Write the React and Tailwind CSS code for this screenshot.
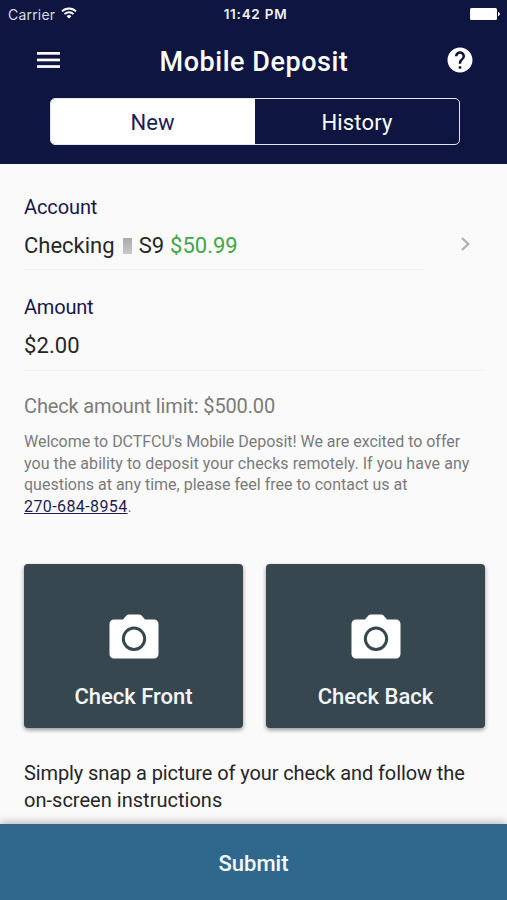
import { MdHelp } from 'react-icons/md';

const StatusBar = () => (
  <div className="grid grid-cols-3 items-center h-7 pl-[8px] pr-[7px] font-['Inter',sans-serif]">
    <div className="flex items-center gap-[6px] text-[14px] tracking-[0.2px] text-[#d9dbe8]">
      <span>Carrier</span>
      <svg className="-mt-[2px]" width="16" height="12" viewBox="0 0 16 12" fill="none" stroke="#fff" strokeWidth="1.9">
        <path d="M1 4.4a10 10 0 0 1 14 0" />
        <path d="M3.5 7.1a6.4 6.4 0 0 1 9 0" />
        <path d="M8 11.6L5.6 9.2a3.4 3.4 0 0 1 4.8 0z" fill="#fff" stroke="none" />
      </svg>
    </div>
    <span className="pl-[3px] text-center text-[13.5px] font-semibold tracking-[0.75px] whitespace-nowrap text-[#f2f3f8]">11:42 PM</span>
    <svg className="justify-self-end -mt-px" width="30" height="12" viewBox="0 0 30 12" fill="#fff">
      <rect width="27" height="12" rx="1.5" />
      <path d="M28 4c1.2.3 1.8 1 1.8 2s-.6 1.700-1.800 2z" />
    </svg>
  </div>
);

const MenuIcon = () => (
  <svg width="23" height="16" viewBox="0 0 23 16" fill="#fff">
    <rect width="23" height="2.700" />
    <rect y="6.600" width="23" height="2.700" />
    <rect y="13.200" width="23" height="2.700" />
  </svg>
);

const CameraIcon = () => (
  <svg width="50" height="45" viewBox="0 0 50 45">
    <path
      d="M5 5.500h9l3.200-3.700A4 4 0 0 1 20 .5h10a4 4 0 0 1 2.800 1.300L36 5.500h9a4.500 4.500 0 0 1 4.500 4.500v30a4.500 4.500 0 0 1-4.500 4.500H5a4.500 4.500 0 0 1-4.500-4.500V10A4.500 4.500 0 0 1 5 5.500z"
      fill="#fff"
    />
    <circle cx="25" cy="24.800" r="10.700" fill="none" stroke="#37474f" strokeWidth="3" />
  </svg>
);

const CheckButton = ({ label }) => (
  <button className="flex-1 h-[164px] pt-[50px] flex flex-col items-center rounded-[4px] bg-[#37474f] shadow-[0_2px_4px_rgba(0,0,0,0.4)]">
    <CameraIcon />
    <span className="mt-[24px] text-[22px] leading-7 font-medium text-[#f4f8fb]">{label}</span>
  </button>
);

const App = () => (
  <div className="w-full h-[900px] flex flex-col overflow-hidden bg-[#fafafa] font-['Roboto',sans-serif] text-[#262626]">
    <header className="h-[164px] shrink-0 bg-[#0e1540] text-white">
      <StatusBar />
      <div className="h-[70px] flex items-center justify-between pl-[37px] pr-[32px] pb-[6px]">
        <button><MenuIcon /></button>
        <h1 className="pt-[4px] pl-[3px] text-[27px] font-medium tracking-[0.53px]">Mobile Deposit</h1>
        <button><MdHelp size={30} /></button>
      </div>
      <div className="mx-[50px] mr-[47px] h-[47px] grid grid-cols-2 border-[1.5px] border-[#e4e6ef] rounded-[5px] overflow-hidden text-[22px]">
        <button className="pt-[2px] pr-px bg-white text-[#1c2050]">New</button>
        <button className="pt-[2px] tracking-[0.15px]">History</button>
      </div>
    </header>

    <main className="flex-1 px-[24px] pr-[22px]">
      <section className="flex items-end pt-[30px]">
        <div className="w-[400px] h-[76px] pt-px border-b border-[#f2f2f2]">
          <div className="text-[20px] leading-6 tracking-[-0.1px] text-[#17174f]">Account</div>
          <div className="mt-[13px] flex items-center text-[22px] leading-7">
            Checking
            <span className="w-[9px] h-4 mx-2 bg-linear-to-b from-[#ababab] to-[#c8c8c8]" />
            <span className="-ml-px">S9</span>
            <span className="ml-[6px] text-[#43a548]">$50.99</span>
          </div>
        </div>
        <svg className="ml-[37px] mb-[19px]" width="9" height="14" viewBox="0 0 9 14" fill="none" stroke="#b2b2b2" strokeWidth="2.400">
          <path d="M1 1l6.200 6L1 13" />
        </svg>
      </section>

      <section className="mt-[25px] h-[76px] border-b border-[#f2f2f2]">
        <div className="text-[20px] leading-6 tracking-[-0.2px] text-[#17174f]">Amount</div>
        <div className="mt-[13px] text-[22px] leading-7 tracking-[0.1px]">$2.00</div>
      </section>

      <p className="mt-[21px] text-[20px] leading-7 tracking-[-0.14px] text-[#7b7b7b]">Check amount limit: $500.00</p>
      <p className="mt-[11px] text-[16px] leading-[21.5px] text-[#7b7b7b]">
        <span className="tracking-[-0.03px]">Welcome to DCTFCU's Mobile Deposit! We are excited to offer</span><br />
        <span className="tracking-[0.06px]">you the ability to deposit your checks remotely. If you have any</span><br />
        questions at any time, please feel free to contact us at<br />
        <a href="tel:2706848954" className="tracking-[0.4px] text-[#1c1c54] underline">270-684-8954</a>.
      </p>

      <div className="mt-[47px] flex gap-[23px]">
        <CheckButton label="Check Front" />
        <CheckButton label="Check Back" />
      </div>

      <p className="mt-[32px] text-[20px] leading-[27px] tracking-[-0.1px]">
        Simply snap a picture of your check and follow the<br />
        <span className="tracking-[0.02px]">on-screen instructions</span>
      </p>
    </main>

    <button className="h-[76px] shrink-0 pt-[2px] bg-[#30688d] text-[22px] font-medium text-[#f4f8fb] shadow-[0_-2px_8px_rgba(0,0,0,0.25)]">
      Submit
    </button>
  </div>
);

export default App;
